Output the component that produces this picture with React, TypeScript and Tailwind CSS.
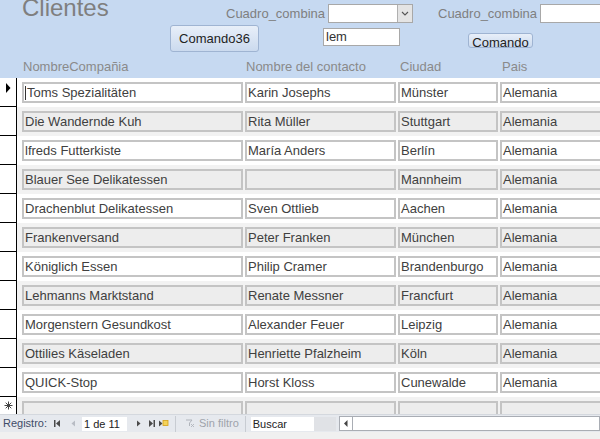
import React from 'react';

const ROWS: [string, string, string, string][] = [
  ['Toms Spezialitäten', 'Karin Josephs', 'Münster', 'Alemania'],
  ['Die Wandernde Kuh', 'Rita Müller', 'Stuttgart', 'Alemania'],
  ['lfreds Futterkiste', 'María Anders', 'Berlín', 'Alemania'],
  ['Blauer See Delikatessen', '', 'Mannheim', 'Alemania'],
  ['Drachenblut Delikatessen', 'Sven Ottlieb', 'Aachen', 'Alemania'],
  ['Frankenversand', 'Peter Franken', 'München', 'Alemania'],
  ['Königlich Essen', 'Philip Cramer', 'Brandenburgo', 'Alemania'],
  ['Lehmanns Marktstand', 'Renate Messner', 'Francfurt', 'Alemania'],
  ['Morgenstern Gesundkost', 'Alexander Feuer', 'Leipzig', 'Alemania'],
  ['Ottilies Käseladen', 'Henriette Pfalzheim', 'Köln', 'Alemania'],
  ['QUICK-Stop', 'Horst Kloss', 'Cunewalde', 'Alemania'],
];

const WIDTHS = ['w-[221px]', 'w-[151px]', 'w-[100px]', 'w-[150px]'];

const Field = ({ value, alt, w, caret }: { value: string; alt: boolean; w: string; caret?: boolean }) => (
  <div
    className={`${w} h-[21px] shrink-0 border-2 border-[#c4c4c4] pl-[1px] text-[13px] leading-[17px] text-[#404040] whitespace-nowrap overflow-hidden flex items-center ${
      alt ? 'bg-[#ededed]' : 'bg-white'
    }`}
  >
    {caret && <span className="w-px h-[14px] bg-[#333] mr-[1px]" />}
    {value}
  </div>
);

const NavIcon = ({ kind, dim }: { kind: 'first' | 'prev' | 'next' | 'last' | 'new'; dim?: boolean }) => {
  const c = dim ? '#b8bcc4' : '#4a4a4a';
  return (
    <svg width="11" height="9" viewBox="0 0 11 9" className="shrink-0">
      {kind === 'first' && (
        <>
          <rect x="2" y="1" width="1.5" height="7" fill={c} />
          <path d="M8 1 L4 4.5 L8 8 Z" fill={c} />
        </>
      )}
      {kind === 'prev' && <path d="M7 1.5 L3.5 4.5 L7 7.5 Z" fill={c} />}
      {kind === 'next' && <path d="M4 1.5 L7.5 4.5 L4 7.5 Z" fill={c} />}
      {kind === 'last' && (
        <>
          <path d="M3 1 L7 4.5 L3 8 Z" fill={c} />
          <rect x="7.5" y="1" width="1.5" height="7" fill={c} />
        </>
      )}
      {kind === 'new' && (
        <>
          <path d="M1 1.5 L4.5 4.5 L1 7.5 Z" fill={c} />
          <rect x="5" y="1.5" width="5" height="5" fill="#f4d35a" stroke="#d4a017" strokeWidth="0.8" />
        </>
      )}
    </svg>
  );
};

export default function App() {
  return (
    <div className="w-[600px] h-[439px] overflow-hidden bg-[#f0f0f0] font-['Liberation_Sans',Arial,sans-serif]">
      {/* Encabezado del formulario */}
      <div className="h-[78px] bg-[#c6d9f1] overflow-hidden">
        <div className="flex h-[25px]">
          <div className="w-[226px] shrink-0 pl-[22px] -mt-[4px] text-[24px] leading-none text-[#7f7f7f]">Clientes</div>
          <div className="w-[102px] shrink-0 mt-[4px] h-[19px] leading-[19px] text-[13px] text-[#7f7f7f] whitespace-nowrap overflow-hidden">
            Cuadro_combina
          </div>
          <div className="w-[85px] shrink-0 mt-[4px] h-[19px] bg-white border border-[#a8a8a8] flex justify-end">
            <div className="w-[15px] h-full bg-[#e4e4e4] border-l border-[#b0b0b0] flex items-center justify-center">
              <svg width="8" height="5" viewBox="0 0 8 5">
                <path d="M1 1 L4 4 L7 1" fill="none" stroke="#555" strokeWidth="1.1" />
              </svg>
            </div>
          </div>
          <div className="w-[102px] shrink-0 ml-[25px] mt-[4px] h-[19px] leading-[19px] text-[13px] text-[#7f7f7f] whitespace-nowrap overflow-hidden">
            Cuadro_combina
          </div>
          <div className="w-[80px] shrink-0 mt-[4px] h-[19px] bg-white border border-[#a8a8a8]" />
        </div>

        <div className="flex h-[28px] items-start">
          <button className="ml-[170px] w-[89px] h-[27px] shrink-0 rounded-[3px] border border-[#9fb4d2] bg-gradient-to-b from-[#e8eff9] to-[#cbdaee] text-[13px] text-[#222]">
            Comando36
          </button>
          <div className="ml-[64px] mt-[3px] w-[77px] h-[18px] shrink-0 bg-white border border-[#a8a8a8] pl-[2px] text-[13px] leading-[16px] text-[#333]">
            lem
          </div>
          <button className="ml-[68px] mt-[8px] w-[65px] h-[15px] shrink-0 rounded-[3px] border border-[#9fb4d2] bg-gradient-to-b from-[#e8eff9] to-[#cbdaee] text-[13px] leading-[15px] pt-[1px] text-[#222] overflow-hidden">
            Comando
          </button>
        </div>

        <div className="flex pt-[6px] text-[13px] leading-[15px] text-[#8a8a8a] whitespace-nowrap">
          <div className="ml-[23px] w-[223px] shrink-0">NombreCompañia</div>
          <div className="w-[154px] shrink-0">Nombre del contacto</div>
          <div className="w-[102px] shrink-0">Ciudad</div>
          <div className="shrink-0">Pais</div>
        </div>
      </div>

      {/* Detalle: registros */}
      <div className="h-[336px] overflow-hidden bg-white">
        {ROWS.map((r, i) => {
          const alt = i % 2 === 1;
          return (
            <div key={i} className="flex h-[29px]">
              <div className="w-[17px] shrink-0 bg-white border-r border-b border-black flex items-start justify-center pt-[5px]">
                {i === 0 && (
                  <svg width="6" height="10" viewBox="0 0 6 10">
                    <path d="M1 0 L5.5 5 L1 10 Z" fill="#000" />
                  </svg>
                )}
              </div>
              <div className={`flex-1 flex gap-[2px] pl-[5px] pt-[4px] ${alt ? 'bg-[#f2f2f2]' : 'bg-white'}`}>
                {r.map((v, j) => (
                  <Field key={j} value={v} alt={alt} w={WIDTHS[j]} caret={i === 0 && j === 0} />
                ))}
              </div>
            </div>
          );
        })}
        <div className="flex h-[29px]">
          <div className="w-[17px] shrink-0 bg-white border-r border-black flex justify-center pt-[4px]">
            <svg width="9" height="9" viewBox="0 0 9 9">
              <path d="M4.5 0.5 V8.5 M0.5 4.5 H8.5 M1.7 1.7 L7.3 7.3 M7.3 1.7 L1.7 7.3" stroke="#444" strokeWidth="1" />
            </svg>
          </div>
          <div className="flex-1 flex gap-[2px] pl-[5px] pt-[4px] bg-[#f2f2f2]">
            {WIDTHS.map((w, j) => (
              <Field key={j} value="" alt w={w} />
            ))}
          </div>
        </div>
      </div>

      {/* Barra de navegación */}
      <div className="h-[18px] flex items-center bg-[#e6e9ee] border-t border-[#d4d8de] text-[11px] whitespace-nowrap">
        <span className="ml-[3px] text-[#3e4c68]">Registro:</span>
        <span className="ml-[5px]"><NavIcon kind="first" /></span>
        <span className="ml-[5px]"><NavIcon kind="prev" dim /></span>
        <div className="ml-[3px] w-[45px] h-[14px] bg-white pl-[2px] leading-[14px] text-[#222]">1 de 11</div>
        <span className="ml-[6px]"><NavIcon kind="next" /></span>
        <span className="ml-[2px]"><NavIcon kind="last" /></span>
        <span className="ml-[1px]"><NavIcon kind="new" /></span>
        <div className="ml-[6px] w-px h-[16px] bg-[#c8ccd2]" />
        <svg width="10" height="9" viewBox="0 0 10 9" className="ml-[9px]">
          <path d="M1 1 H7 L4.5 4 V7" fill="none" stroke="#b0b4bb" strokeWidth="1" />
          <path d="M6 5 L9 8 M9 5 L6 8" stroke="#b0b4bb" strokeWidth="0.9" />
        </svg>
        <span className="ml-[4px] text-[#9ea3ab]">Sin filtro</span>
        <div className="ml-[6px] w-px h-[16px] bg-[#c8ccd2]" />
        <div className="ml-[5px] w-[63px] h-[14px] bg-white pl-[2px] leading-[14px] text-[#222]">Buscar</div>
        <div className="w-[22px] h-[14px] bg-[#e0e2e6]" />
        <div className="ml-[3px] flex-1 h-[15px] bg-white border border-[#a9adb4] flex items-center">
          <div className="w-[13px] h-full border-r border-[#a9adb4] flex items-center justify-center">
            <svg width="4" height="7" viewBox="0 0 4 7">
              <path d="M3.5 0 L0 3.5 L3.5 7 Z" fill="#444" />
            </svg>
          </div>
        </div>
      </div>
    </div>
  );
}
